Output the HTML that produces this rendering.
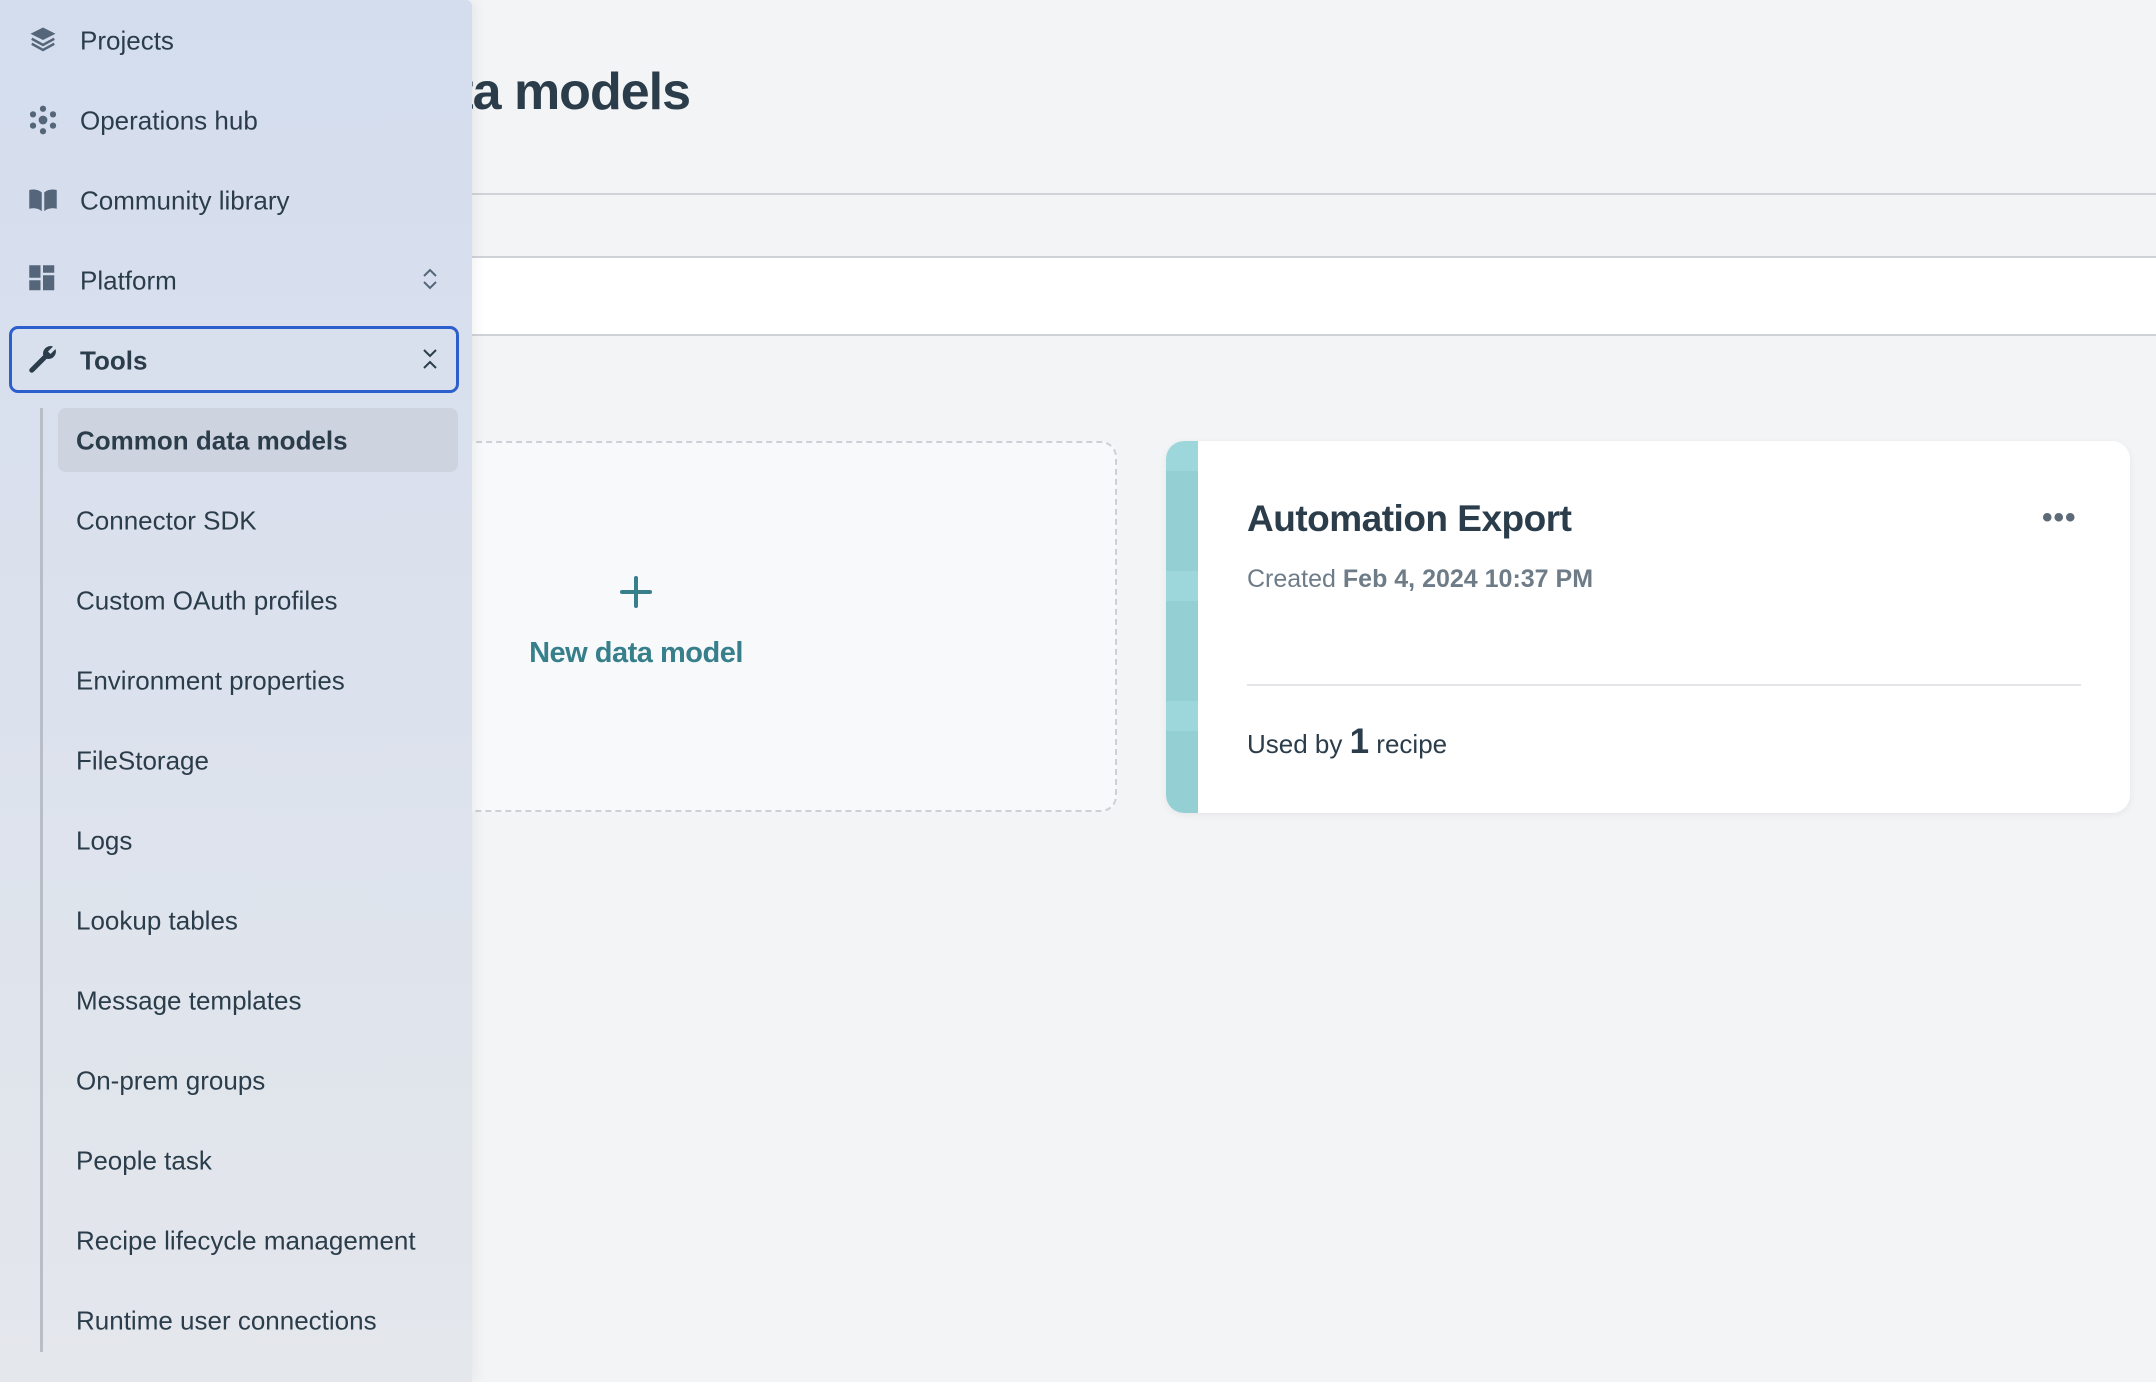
<!DOCTYPE html>
<html><head><meta charset="utf-8"><style>
*{margin:0;padding:0;box-sizing:border-box}
body{width:2156px;height:1382px;overflow:hidden;background:#f3f4f6;font-family:"Liberation Sans",sans-serif;color:#2b3d4b;position:relative}
.abs{position:absolute}
.h1{right:1466px;top:62px;font-size:52px;font-weight:bold;white-space:nowrap;color:#2b3d4b;letter-spacing:-1px}
.side{left:0;top:0;width:472px;height:1382px;background:linear-gradient(#d4ddee,#e4e7ec);box-shadow:4px 0 12px rgba(0,0,0,.05);border-top-right-radius:6px;z-index:5}
.it{position:absolute;left:80px;font-size:26px;transform:translateY(-50%);white-space:nowrap;color:#2b3d4b}
.ic{position:absolute;left:28px;transform:translateY(-50%)}
.sub{position:absolute;left:76px;font-size:26px;transform:translateY(-50%);white-space:nowrap;color:#2b3d4b}
</style></head><body>
<div class="abs h1">Common data models</div>
<div class="abs" style="left:0;top:193px;width:2156px;height:2px;background:#cfd3d8"></div>
<div class="abs" style="left:0;top:256px;width:2156px;height:80px;background:#fff;border-top:2px solid #cfd3d8;border-bottom:2px solid #cfd3d8"></div>

<div class="abs" style="left:150px;top:441px;width:967px;height:371px;border:2px dashed #cdd1d6;border-radius:16px;background:#f8f9fb"></div>
<div class="abs" style="left:620px;top:576px;width:32px;height:32px">
<div class="abs" style="left:14px;top:0;width:4px;height:32px;background:#367f8b;border-radius:2px"></div>
<div class="abs" style="left:0;top:14px;width:32px;height:4px;background:#367f8b;border-radius:2px"></div></div>
<div class="abs" style="left:436px;top:637px;width:400px;text-align:center;font-size:29px;font-weight:bold;color:#367f8b;letter-spacing:-0.5px">New data model</div>

<div class="abs" style="left:1166px;top:441px;width:964px;height:372px;background:#fff;border-radius:18px;overflow:hidden;box-shadow:0 2px 8px rgba(0,0,0,.06)">
<div class="abs" style="left:0;top:0;width:32px;height:372px;background:repeating-linear-gradient(#9ed7db 0 30px,#94cfd4 30px 130px)"></div>
<div class="abs" style="left:81px;top:57px;font-size:37px;font-weight:bold;color:#2b3d4b;letter-spacing:-0.5px">Automation Export</div>
<div class="abs" style="left:81px;top:124px;font-size:25px;color:#6e7c88">Created <b>Feb 4, 2024 10:37 PM</b></div>
<div class="abs" style="left:81px;top:243px;width:834px;height:2px;background:#e3e5e8"></div>
<div class="abs" style="left:81px;top:281px;font-size:26px;color:#2b3d4b">Used by <b style="font-size:35px">1</b> recipe</div>
<div class="abs" style="left:876px;top:60px;font-size:30px;font-weight:bold;color:#5d6b78;letter-spacing:1px">&#8226;&#8226;&#8226;</div>
</div>

<div class="abs side">
<svg class="ic" style="top:40px" width="30" height="30" viewBox="0 0 24 24"><path d="M12 2 22 7 12 12 2 7Z" fill="#55667a"/><path d="M3 11l9 5 9-5M3 15l9 5 9-5" stroke="#55667a" stroke-width="2" fill="none"/></svg>
<div class="it" style="top:41px">Projects</div>
<svg class="ic" style="top:120px" width="30" height="30" viewBox="0 0 24 24" fill="#55667a"><circle cx="12" cy="12" r="3.5"/><circle cx="12" cy="3" r="2.5"/><circle cx="12" cy="21" r="2.5"/><circle cx="4" cy="7.5" r="2.5"/><circle cx="20" cy="7.5" r="2.5"/><circle cx="4" cy="16.5" r="2.5"/><circle cx="20" cy="16.5" r="2.5"/></svg>
<div class="it" style="top:121px">Operations hub</div>
<svg class="ic" style="top:200px" width="30" height="30" viewBox="0 0 24 24" fill="#55667a"><path d="M1 4c4-1 8 0 10 2v15c-2-2-6-3-10-2Z M23 4c-4-1-8 0-10 2v15c2-2 6-3 10-2Z"/></svg>
<div class="it" style="top:201px">Community library</div>
<svg class="ic" style="top:279px" width="30" height="30" viewBox="0 0 24 24" fill="#55667a"><rect x="1" y="1" width="9" height="10"/><rect x="12" y="1" width="9" height="6"/><rect x="1" y="13" width="9" height="8"/><rect x="12" y="9" width="9" height="12"/></svg>
<div class="it" style="top:281px">Platform</div>
<svg class="abs" style="left:420px;top:266px" width="20" height="26" viewBox="0 0 20 26"><path d="M4 10 10 4 16 10M4 16 10 22 16 16" stroke="#55667a" stroke-width="2" fill="none"/></svg>
<div class="abs" style="left:9px;top:326px;width:450px;height:67px;border:3px solid #2d5fcc;border-radius:9px"></div>
<svg class="ic" style="top:359px" width="30" height="30" viewBox="0 0 24 24"><path d="M3 21 13 11" stroke="#2b3d4b" stroke-width="4" stroke-linecap="round"/><path d="M13 11a6 6 0 0 1 7-9l-4 4 2 2 4-4a6 6 0 0 1-9 7Z" fill="#2b3d4b"/></svg>
<div class="it" style="top:361px;font-weight:bold">Tools</div>
<svg class="abs" style="left:420px;top:346px" width="20" height="26" viewBox="0 0 20 26"><path d="M4 4 10 10 16 4M4 22 10 16 16 22" stroke="#2b3d4b" stroke-width="2" fill="none"/></svg>
<div class="abs" style="left:40px;top:408px;width:3px;height:944px;background:#b9bec6"></div>
<div class="abs" style="left:58px;top:408px;width:400px;height:64px;background:#cdd4df;border-radius:8px"></div>
<div class="sub" style="top:441px;font-weight:bold">Common data models</div>
<div class="sub" style="top:521px">Connector SDK</div>
<div class="sub" style="top:601px">Custom OAuth profiles</div>
<div class="sub" style="top:681px">Environment properties</div>
<div class="sub" style="top:761px">FileStorage</div>
<div class="sub" style="top:841px">Logs</div>
<div class="sub" style="top:921px">Lookup tables</div>
<div class="sub" style="top:1001px">Message templates</div>
<div class="sub" style="top:1081px">On-prem groups</div>
<div class="sub" style="top:1161px">People task</div>
<div class="sub" style="top:1241px">Recipe lifecycle management</div>
<div class="sub" style="top:1321px">Runtime user connections</div>
</div>
</body></html>
